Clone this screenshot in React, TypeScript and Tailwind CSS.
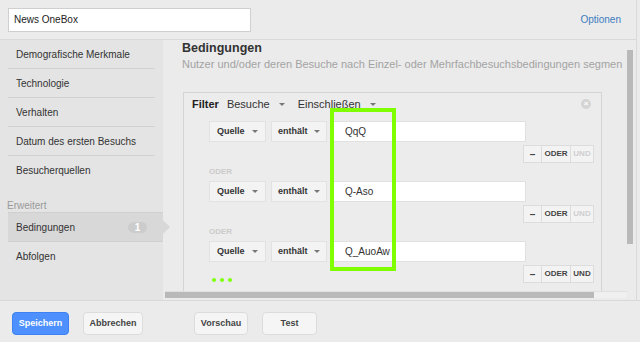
import React from 'react';

const sidebarItems = [
  'Demografische Merkmale',
  'Technologie',
  'Verhalten',
  'Datum des ersten Besuchs',
  'Besucherquellen'
];

const conditions = [
  { value: 'QqQ', undActive: false },
  { value: 'Q-Aso', undActive: false },
  { value: 'Q_AuoAw', undActive: true }
];

const Caret = () => (
  <span className="inline-block w-0 h-0 border-l-[3px] border-r-[3px] border-t-[3px] border-l-transparent border-r-transparent border-t-[#777]" />
);

const App: React.FC = () => {
  return (
    <div className="relative w-[640px] h-[342px] overflow-hidden bg-[#ebebeb] flex flex-col font-['Liberation_Sans',Arial,sans-serif] text-[11px] text-[#333]">
      <div className="flex h-[300px]">
        <div className="w-[636px] flex flex-col">
          {/* Top bar */}
          <div className="h-[40px] shrink-0 border-b border-[#d9d9d9] flex items-center justify-between pl-2 pr-[15px]">
            <div className="w-[243px] h-[24px] bg-white border border-[#cfcfcf] flex items-center pl-[5px] text-[10px] text-[#222]">
              News OneBox
            </div>
            <span className="text-[10px] text-[#3d7cbf]">Optionen</span>
          </div>

          <div className="flex flex-1 min-h-0">
            {/* Sidebar */}
            <div className="w-[163px] shrink-0 bg-[#e4e4e4] flex flex-col text-[10px]">
              {sidebarItems.map((item, i) => (
                <div
                  key={item}
                  className={`h-[29px] mx-2 px-2 flex items-center text-[#333] ${
                    i < sidebarItems.length - 1 ? 'border-b border-[#d2d2d2]' : ''
                  }`}
                >
                  {item}
                </div>
              ))}
              <div className="mt-[15px] h-[12px] pl-[7px] text-[10px] leading-[12px] text-[#9a9a9a]">Erweitert</div>
              <div className="relative ml-2 h-[30px] bg-[#d8d8d8] border-t border-b border-[#d0d0d0] flex items-center justify-between pl-2 pr-4">
                <span>Bedingungen</span>
                <span className="w-[19px] h-[11px] rounded-full bg-[#cccccc] text-white font-bold text-[10px] leading-[11px] flex items-center justify-center">1</span>
                <span className="absolute right-[-7px] top-[7px] w-0 h-0 border-t-[7px] border-b-[7px] border-l-[7px] border-t-transparent border-b-transparent border-l-[#d8d8d8]" />
              </div>
              <div className="h-[29px] mx-2 px-2 flex items-center">Abfolgen</div>
            </div>

            {/* Main content */}
            <div className="flex-1 flex flex-col min-w-0">
              <div className="flex flex-1 min-h-0">
                <div className="flex-1 min-w-0 overflow-hidden pl-[19px]">
                  <div className="text-[12.5px] leading-[16px] font-bold text-[#333]">Bedingungen</div>
                  <div className="mt-[2px] leading-[12px] text-[#a3a3a3] whitespace-nowrap">
                    Nutzer und/oder deren Besuche nach Einzel- oder Mehrfachbesuchsbedingungen segmen
                  </div>

                  <div className="mt-[22px] ml-px w-[419px] h-[220px] border border-[#d4d4d4] bg-[#ececec]">
                    <div className="h-[22px] flex items-center pl-2 pr-2">
                      <span className="font-bold text-[#222]">Filter</span>
                      <span className="ml-2 flex items-center gap-[9px]">Besuche <Caret /></span>
                      <span className="ml-[13px] flex items-center gap-[9px]">Einschließen <Caret /></span>
                      <span className="ml-auto mr-[2px] w-[10px] h-[10px] rounded-full bg-[#d4d4d4] text-white text-[8px] leading-[10px] font-bold flex items-center justify-center">×</span>
                    </div>

                    <div className="mt-[6px] pl-[25px] pr-[7px]">
                      {conditions.map((c, i) => (
                        <div key={c.value}>
                          {i > 0 && (
                            <div className="mt-[3px] h-[12px] text-[8px] leading-[12px] font-bold text-[#cbcbcb]">ODER</div>
                          )}
                          <div className={`flex items-center h-[21px] ${i > 0 ? 'mt-[3px]' : ''}`}>
                            <div className="w-[57px] h-[21px] bg-[#f3f3f3] border border-[#e2e2e2] flex items-center justify-between pl-[7px] pr-[7px] text-[9px] font-bold text-[#333]">
                              Quelle <Caret />
                            </div>
                            <div className="ml-[5px] w-[56px] h-[21px] bg-[#f3f3f3] border border-[#e2e2e2] flex items-center justify-between pl-[6px] pr-[6px] text-[9px] font-bold text-[#333]">
                              enthält <Caret />
                            </div>
                            <div className="ml-[6px] w-[193px] h-[21px] bg-white border border-[#e0e0e0] flex items-center pl-[11px] text-[10px] text-[#333]">
                              {c.value}
                            </div>
                          </div>
                          <div className="mt-[3px] flex items-end justify-between h-[18px]">
                            <div className="flex gap-[4px] pl-[3px] mb-[1px]">
                              {i === conditions.length - 1 && (
                                <>
                                  <span className="w-[4px] h-[4px] rounded-full bg-[#7fff00]" />
                                  <span className="w-[4px] h-[4px] rounded-full bg-[#7fff00]" />
                                  <span className="w-[4px] h-[4px] rounded-full bg-[#7fff00]" />
                                </>
                              )}
                            </div>
                            <div className="flex h-[18px] text-[8px] font-bold">
                              <div className="w-[19px] bg-[#f3f3f3] border border-[#dcdcdc] flex items-center justify-center text-[10px] text-[#444]">–</div>
                              <div className="w-[29px] bg-[#f3f3f3] border border-l-0 border-[#dcdcdc] flex items-center justify-center text-[#444]">ODER</div>
                              <div className={`w-[23px] bg-[#f3f3f3] border border-l-0 border-[#dcdcdc] flex items-center justify-center ${c.undActive ? 'text-[#444]' : 'text-[#cfcfcf]'}`}>UND</div>
                            </div>
                          </div>
                        </div>
                      ))}
                    </div>
                  </div>
                </div>

                {/* Vertical scrollbar */}
                <div className="w-[9px] shrink-0 pt-[10px]">
                  <div className="w-[6px] h-[194px] bg-[#b9b9b9]" />
                </div>
              </div>

              {/* Horizontal scrollbar */}
              <div className="h-[7px] ml-[2px] mr-[9px] mb-[2px] bg-[#f0f0f0] border-t border-[#e0e0e0]">
                <div className="w-[429px] h-full bg-[#b9b9b9]" />
              </div>
            </div>
          </div>
        </div>
        <div className="w-px bg-[#dadada]" />
        <div className="flex-1" />
      </div>

      {/* Footer */}
      <div className="flex-1 border-t border-[#d9d9d9] flex items-start pt-[11px] pl-3 font-bold text-[9px]">
        <button className="w-[57px] h-[23px] rounded-sm bg-[#4d90fe] border border-[#3d82f0] text-white">Speichern</button>
        <button className="ml-[14px] w-[60px] h-[23px] rounded-sm bg-[#f5f5f5] border border-[#dcdcdc] text-[#444]">Abbrechen</button>
        <button className="ml-[51px] w-[54px] h-[23px] rounded-sm bg-[#f5f5f5] border border-[#dcdcdc] text-[#444]">Vorschau</button>
        <button className="ml-[14px] w-[55px] h-[23px] rounded-sm bg-[#f5f5f5] border border-[#dcdcdc] text-[#444]">Test</button>
      </div>

      {/* Highlight annotation */}
      <div className="absolute left-[330px] top-[108px] w-[66px] h-[163px] border-4 border-[#7fff00]" />
    </div>
  );
};

export default App;
